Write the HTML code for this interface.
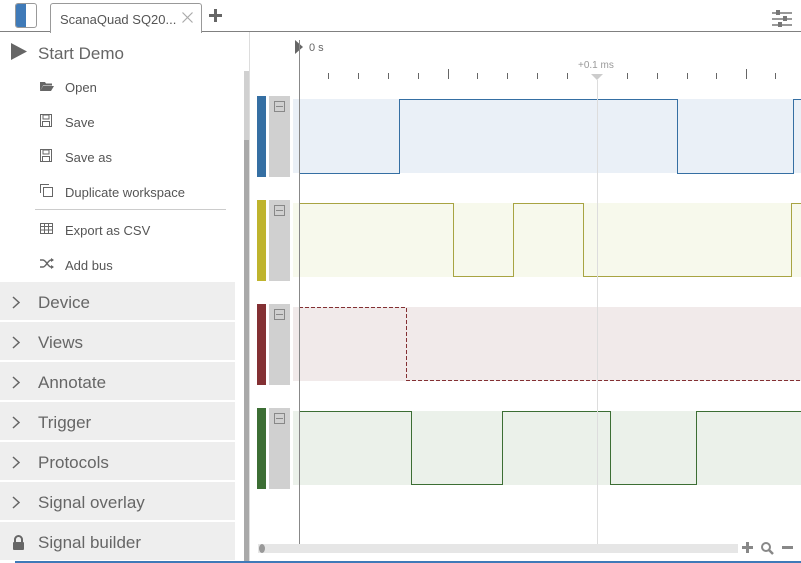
<!DOCTYPE html>
<html><head><meta charset="utf-8"><style>
*{margin:0;padding:0;box-sizing:border-box}
body{width:801px;height:563px;overflow:hidden;background:#fff;font-family:"Liberation Sans",sans-serif;position:relative;color:#555}
.abs{position:absolute}
.item{position:absolute;left:65px;font-size:13px;color:#555}
.ic{position:absolute;left:40px}
.sec{position:absolute;left:0;width:235px;height:38px;background:#eeeeee;font-size:17px;color:#666}
.sec span{position:absolute;left:38px;top:11px}
.sec svg{position:absolute;left:12px;top:14px}
</style></head><body>
<div class="abs" style="left:0;top:31px;width:801px;height:1px;background:#808080"></div>
<div class="abs" style="left:15px;top:3px;width:22px;height:25px;border:1px solid #999;border-radius:3px;overflow:hidden;background:#fff"><div style="width:10px;height:100%;background:#3f7ab8"></div></div>
<div class="abs" style="left:50px;top:3px;width:152px;height:30px;border:1px solid #999;border-bottom:none;border-radius:3px 3px 0 0;background:#fff;font-size:13px;color:#555;padding:8px 0 0 9px">ScanaQuad SQ20...<svg style="position:absolute;left:131px;top:8px" width="11" height="11"><path d="M0.5 0.5L10.5 10.5M10.5 0.5L0.5 10.5" stroke="#aaa" stroke-width="1.2"/></svg></div>
<svg class="abs" style="left:209px;top:9px" width="13" height="13"><path d="M6.5 0v13M0 6.5h13" stroke="#666" stroke-width="3"/></svg>
<svg class="abs" style="left:771px;top:10px" width="22" height="18"><g stroke="#999" stroke-width="2"><line x1="1" y1="3" x2="21" y2="3"/><line x1="1" y1="9" x2="21" y2="9"/><line x1="1" y1="15" x2="21" y2="15"/></g><g fill="#777"><rect x="5" y="0" width="4" height="5"/><rect x="12" y="6" width="4" height="5"/><rect x="7" y="12" width="4" height="5"/></g></svg>
<svg class="abs" style="left:11px;top:43px" width="16" height="17"><polygon points="0,0 16,8.5 0,17" fill="#666"/></svg>
<div class="abs" style="left:38px;top:44px;font-size:17px;color:#666">Start Demo</div>
<svg class="ic" style="top:81px" width="14" height="11"><path d="M0 1h5l1 1.5h6v2H3L0 10z" fill="#666"/><path d="M3 5h11l-3 5H0z" fill="#666"/></svg>
<div class="item" style="top:80px">Open</div>
<svg class="ic" style="top:114px" width="12" height="13"><rect x="0.5" y="0.5" width="11" height="12" fill="none" stroke="#666"/><rect x="3" y="1" width="6" height="4" fill="none" stroke="#666"/><rect x="2.5" y="7.5" width="7" height="5" fill="none" stroke="#666"/></svg>
<div class="item" style="top:115px">Save</div>
<svg class="ic" style="top:149px" width="12" height="13"><rect x="0.5" y="0.5" width="11" height="12" fill="none" stroke="#666"/><rect x="3" y="1" width="6" height="4" fill="none" stroke="#666"/><rect x="2.5" y="7.5" width="7" height="5" fill="none" stroke="#666"/></svg>
<div class="item" style="top:150px">Save as</div>
<svg class="ic" style="top:184px" width="13" height="13"><path d="M0.5 9V0.5H9" fill="none" stroke="#666"/><rect x="3.5" y="3.5" width="9" height="9" fill="none" stroke="#666"/></svg>
<div class="item" style="top:185px">Duplicate workspace</div>
<div class="abs" style="left:35px;top:209px;width:191px;height:1px;background:#ccc"></div>
<svg class="ic" style="top:223px" width="13" height="11"><rect x="0.5" y="0.5" width="12" height="10" fill="none" stroke="#666"/><path d="M0 3.5h13M0 7h13M4.5 0v11M8.5 0v11" stroke="#666"/></svg>
<div class="item" style="top:223px">Export as CSV</div>
<svg class="ic" style="top:258px" width="14" height="11"><path d="M0 2h3c3 0 5 7 8 7h2M0 9h3c3 0 5-7 8-7h2" fill="none" stroke="#666" stroke-width="1.5"/><path d="M11 0l3 2-3 2zM11 7l3 2-3 2z" fill="#666"/></svg>
<div class="item" style="top:258px">Add bus</div>
<div class="sec" style="top:282px"><svg width="8" height="13"><path d="M1 1l6 5.5L1 12" fill="none" stroke="#666" stroke-width="1.5"/></svg><span>Device</span></div>
<div class="sec" style="top:322px"><svg width="8" height="13"><path d="M1 1l6 5.5L1 12" fill="none" stroke="#666" stroke-width="1.5"/></svg><span>Views</span></div>
<div class="sec" style="top:362px"><svg width="8" height="13"><path d="M1 1l6 5.5L1 12" fill="none" stroke="#666" stroke-width="1.5"/></svg><span>Annotate</span></div>
<div class="sec" style="top:402px"><svg width="8" height="13"><path d="M1 1l6 5.5L1 12" fill="none" stroke="#666" stroke-width="1.5"/></svg><span>Trigger</span></div>
<div class="sec" style="top:442px"><svg width="8" height="13"><path d="M1 1l6 5.5L1 12" fill="none" stroke="#666" stroke-width="1.5"/></svg><span>Protocols</span></div>
<div class="sec" style="top:482px"><svg width="8" height="13"><path d="M1 1l6 5.5L1 12" fill="none" stroke="#666" stroke-width="1.5"/></svg><span>Signal overlay</span></div>
<div class="sec" style="top:522px"><svg width="13" height="15" style="top:13px"><path d="M3 7V4.5a3.5 3.5 0 0 1 7 0V7" fill="none" stroke="#666" stroke-width="2"/><rect x="1" y="7" width="11" height="8" rx="1" fill="#666"/></svg><span>Signal builder</span></div>
<div class="abs" style="left:244px;top:71px;width:5px;height:490px;background:#d0d0d0"></div>
<div class="abs" style="left:244px;top:140px;width:5px;height:421px;background:#a9a9a9"></div>
<div class="abs" style="left:249px;top:32px;width:1px;height:531px;background:#ddd"></div>
<div class="abs" style="left:15px;top:561px;width:786px;height:2px;background:#3f7ab8"></div>
<svg class="abs" style="left:0;top:0" width="801" height="563">
<polygon points="295,40 303,47 295,54" fill="#666"/>
<text x="309" y="51" font-size="11" fill="#666" font-family="Liberation Sans">0 s</text>
<text x="578" y="68" font-size="10" fill="#999" font-family="Liberation Sans">+0.1 ms</text>
<g stroke="#666" stroke-width="1">
<line x1="328.5" y1="73" x2="328.5" y2="79"/><line x1="358.5" y1="73" x2="358.5" y2="79"/><line x1="388.5" y1="73" x2="388.5" y2="79"/><line x1="418.5" y1="73" x2="418.5" y2="79"/><line x1="448.5" y1="69" x2="448.5" y2="79"/><line x1="477.5" y1="73" x2="477.5" y2="79"/><line x1="507.5" y1="73" x2="507.5" y2="79"/><line x1="537.5" y1="73" x2="537.5" y2="79"/><line x1="567.5" y1="73" x2="567.5" y2="79"/><line x1="627.5" y1="73" x2="627.5" y2="79"/><line x1="657.5" y1="73" x2="657.5" y2="79"/><line x1="687.5" y1="73" x2="687.5" y2="79"/><line x1="716.5" y1="73" x2="716.5" y2="79"/><line x1="746.5" y1="69" x2="746.5" y2="79"/><line x1="775.5" y1="73" x2="775.5" y2="79"/>
</g>
<polygon points="591,74 603,74 597,80" fill="#ccc"/>
<rect x="257" y="96" width="9" height="81" fill="#356fa3"/><rect x="269" y="96" width="21" height="81" fill="#d0d0d0"/>
<rect x="293" y="99" width="508" height="74" fill="#eaf0f7"/>
<polyline points="299,173.5 399.5,173.5 399.5,99.5 677.5,99.5 677.5,173.5 793.5,173.5 793.5,99.5 801,99.5" fill="none" stroke="#356fa3"/>
<rect x="257" y="200" width="9" height="81" fill="#bfb42d"/><rect x="269" y="200" width="21" height="81" fill="#d0d0d0"/>
<rect x="293" y="203" width="508" height="74" fill="#f7f9ec"/>
<polyline points="299,203.5 453.5,203.5 453.5,276.5 513.5,276.5 513.5,203.5 583.5,203.5 583.5,276.5 791.5,276.5 791.5,203.5 801,203.5" fill="none" stroke="#a8a442"/>
<rect x="257" y="304" width="9" height="81" fill="#833033"/><rect x="269" y="304" width="21" height="81" fill="#d0d0d0"/>
<rect x="293" y="307" width="508" height="74" fill="#f1eaea"/>
<polyline points="299,307.5 406.5,307.5 406.5,380.5 801,380.5" fill="none" stroke="#833033" stroke-dasharray="4,2"/>
<rect x="257" y="408" width="9" height="81" fill="#3c6e34"/><rect x="269" y="408" width="21" height="81" fill="#d0d0d0"/>
<rect x="293" y="411" width="508" height="74" fill="#ebf1ea"/>
<polyline points="299,411.5 411.5,411.5 411.5,484.5 502.5,484.5 502.5,411.5 610.5,411.5 610.5,484.5 696.5,484.5 696.5,411.5 801,411.5" fill="none" stroke="#3c6e34"/>
<g fill="none" stroke="#888"><rect x="274.5" y="101.5" width="10" height="10"/><line x1="276" y1="106.5" x2="283" y2="106.5"/><rect x="274.5" y="205.5" width="10" height="10"/><line x1="276" y1="210.5" x2="283" y2="210.5"/><rect x="274.5" y="309.5" width="10" height="10"/><line x1="276" y1="314.5" x2="283" y2="314.5"/><rect x="274.5" y="413.5" width="10" height="10"/><line x1="276" y1="418.5" x2="283" y2="418.5"/></g>
<line x1="597.5" y1="80" x2="597.5" y2="545" stroke="#ddd"/>
<line x1="299.5" y1="40" x2="299.5" y2="545" stroke="#888"/>
<rect x="258" y="544" width="480" height="9" fill="#e6e6e6"/>
<ellipse cx="262" cy="548.5" rx="3" ry="4.5" fill="#999"/>
<g fill="#888"><rect x="742" y="546" width="11" height="3"/><rect x="746" y="542" width="3" height="11"/><rect x="782" y="546" width="11" height="3"/></g>
<circle cx="766" cy="547" r="4" fill="none" stroke="#888" stroke-width="2"/><line x1="769" y1="550" x2="773" y2="554" stroke="#888" stroke-width="2.5"/>
</svg>
</body></html>
